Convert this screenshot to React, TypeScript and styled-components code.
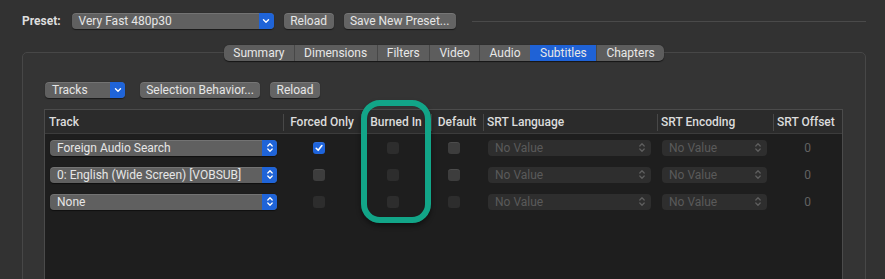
import React from "react";
import styled, { createGlobalStyle } from "styled-components";

const GlobalStyle = createGlobalStyle`
  html, body {
    margin: 0;
    padding: 0;
    background: #323232;
  }
  body {
    font-family: Roboto, "Liberation Sans", sans-serif;
    font-size: 12px;
    color: #e2e2e2;
  }
`;

type Track = {
  name: string;
  forced: boolean;
  dim: boolean;
};

const tracks: Track[] = [
  { name: "Foreign Audio Search", forced: true, dim: false },
  { name: "0: English (Wide Screen) [VOBSUB]", forced: false, dim: false },
  { name: "None", forced: false, dim: true },
];

const tabs = ["Summary", "Dimensions", "Filters", "Video", "Audio", "Subtitles", "Chapters"];

const columns = [
  { title: "Track", align: "left" },
  { title: "Forced Only", align: "center" },
  { title: "Burned In", align: "center" },
  { title: "Default", align: "center" },
  { title: "SRT Language", align: "left" },
  { title: "SRT Encoding", align: "left" },
  { title: "SRT Offset", align: "left" },
];

function ChevronDown() {
  return (
    <svg width="8" height="6" viewBox="0 0 8 6">
      <path d="M1.5 1.8 L4 4.2 L6.5 1.8" fill="none" stroke="#fff" strokeWidth="1.4" strokeLinecap="round" strokeLinejoin="round" />
    </svg>
  );
}

function ChevronUpDown({ color = "#fff" }: { color?: string }) {
  return (
    <svg width="8" height="11" viewBox="0 0 8 11">
      <path d="M1.8 4 L4 1.8 L6.2 4" fill="none" stroke={color} strokeWidth="1.3" strokeLinecap="round" strokeLinejoin="round" />
      <path d="M1.8 7 L4 9.2 L6.2 7" fill="none" stroke={color} strokeWidth="1.3" strokeLinecap="round" strokeLinejoin="round" />
    </svg>
  );
}

function Check() {
  return (
    <svg width="10" height="10" viewBox="0 0 10 10">
      <path d="M2.2 5.3 L4.2 7.3 L7.9 2.6" fill="none" stroke="#fff" strokeWidth="1.6" strokeLinecap="round" strokeLinejoin="round" />
    </svg>
  );
}

function App() {
  return (
    <Window>
      <GlobalStyle />
      <TopBar>
        <Label>Preset:</Label>
        <PopUp $width={202}>
          <PopText>Very Fast 480p30</PopText>
          <ArrowCap>
            <ChevronDown />
          </ArrowCap>
        </PopUp>
        <PushButton $width={50}>Reload</PushButton>
        <PushButton $width={112}>Save New Preset...</PushButton>
        <Rule />
      </TopBar>

      <Panel>
        <TabBar>
          {tabs.map((t) => (
            <Tab key={t} $active={t === "Subtitles"}>
              {t}
            </Tab>
          ))}
        </TabBar>

        <Toolbar>
          <PopUp $width={80}>
            <PopText>Tracks</PopText>
            <ArrowCap>
              <ChevronDown />
            </ArrowCap>
          </PopUp>
          <PushButton $width={120} $gap={15}>Selection Behavior...</PushButton>
          <PushButton $width={50}>Reload</PushButton>
        </Toolbar>

        <Table>
          <HeaderRow>
            {columns.map((c, i) => (
              <HeaderCell key={c.title} $align={c.align} $sep={i > 0}>
                {c.title}
              </HeaderCell>
            ))}
          </HeaderRow>
          {tracks.map((t) => (
            <Row key={t.name}>
              <TrackCell>
                <PopUp $width={227}>
                  <PopText>{t.name}</PopText>
                  <ArrowCap>
                    <ChevronUpDown />
                  </ArrowCap>
                </PopUp>
              </TrackCell>
              <BoxCell>
                <Checkbox $checked={t.forced} $dim={t.dim}>
                  {t.forced && <Check />}
                </Checkbox>
              </BoxCell>
              <BoxCell>
                <Checkbox $checked={false} $dim />
              </BoxCell>
              <BoxCell>
                <Checkbox $checked={false} $dim={t.dim} />
              </BoxCell>
              <TrackCell>
                <DisabledPopUp $width={163}>
                  <span>No Value</span>
                  <ChevronUpDown color="#5e5e5e" />
                </DisabledPopUp>
              </TrackCell>
              <TrackCell>
                <DisabledPopUp $width={105}>
                  <span>No Value</span>
                  <ChevronUpDown color="#5e5e5e" />
                </DisabledPopUp>
              </TrackCell>
              <OffsetCell>0</OffsetCell>
            </Row>
          ))}
        </Table>
      </Panel>

      <Highlight />
    </Window>
  );
}

const Window = styled.div`
  position: relative;
  height: 279px;
  overflow: hidden;
  background: #323232;
`;

const TopBar = styled.div`
  display: flex;
  align-items: center;
  height: 16px;
  padding: 13px 19px 0 22px;
`;

const Label = styled.span`
  font-weight: 700;
  color: #dedede;
  margin-right: 11px;
`;

const PopUp = styled.div<{ $width: number }>`
  position: relative;
  display: flex;
  align-items: center;
  box-sizing: border-box;
  width: ${(p) => p.$width}px;
  height: 16px;
  border-radius: 4px;
  background: #606060;
  box-shadow: inset 0 1px 0 rgba(255, 255, 255, 0.12), 0 0.5px 1px rgba(0, 0, 0, 0.5);
  overflow: hidden;
`;

const PopText = styled.span`
  flex: 1;
  padding-left: 7px;
  color: #e6e6e6;
  white-space: nowrap;
  overflow: hidden;
`;

const ArrowCap = styled.span`
  display: flex;
  align-items: center;
  justify-content: center;
  width: 15px;
  height: 100%;
  background: #1f64d8;
`;

const PushButton = styled.div<{ $width: number; $gap?: number }>`
  display: flex;
  align-items: center;
  justify-content: center;
  box-sizing: border-box;
  width: ${(p) => p.$width}px;
  height: 16px;
  margin-left: ${(p) => p.$gap ?? 10}px;
  border-radius: 4px;
  background: #646464;
  box-shadow: inset 0 1px 0 rgba(255, 255, 255, 0.12), 0 0.5px 1px rgba(0, 0, 0, 0.5);
  color: #e6e6e6;
  white-space: nowrap;
`;

const Rule = styled.div`
  flex: 1;
  height: 1px;
  margin-left: 16px;
  background: #4a4a4a;
`;

const Panel = styled.div`
  box-sizing: border-box;
  width: 844px;
  height: 260px;
  margin: 23px 0 0 22px;
  border: 1px solid #474747;
  border-radius: 5px;
  background: #343434;
  padding: 0 21px;
`;

const TabBar = styled.div`
  display: flex;
  width: fit-content;
  margin: -8px auto 0;
  height: 16px;
  border-radius: 5px;
  overflow: hidden;
  background: #5d5d5d;
  box-shadow: 0 0.5px 1px rgba(0, 0, 0, 0.6);
`;

const Tab = styled.div<{ $active: boolean }>`
  display: flex;
  align-items: center;
  padding: 0 9.3px;
  color: #e8e8e8;
  background: ${(p) => (p.$active ? "#1f62d6" : "transparent")};
  border-left: 1px solid ${(p) => (p.$active ? "#1f62d6" : "#474747")};

  &:first-child {
    border-left: none;
  }
`;

const Toolbar = styled.div`
  display: flex;
  align-items: center;
  margin: 21px 0 0 1px;
`;

const Table = styled.div`
  box-sizing: border-box;
  width: 799px;
  height: 200px;
  margin-top: 11px;
  border: 1px solid #4b4b4b;
  background: #1e1e1e;
`;

const grid = `
  display: grid;
  grid-template-columns: 238px 78px 70px 52px 174px 116px 69px;
`;

const HeaderRow = styled.div`
  ${grid}
  height: 23px;
  background: #2b2b2b;
  border-bottom: 1px solid #3c3c3c;
`;

const HeaderCell = styled.div<{ $align: string; $sep: boolean }>`
  position: relative;
  display: flex;
  align-items: center;
  justify-content: ${(p) => (p.$align === "center" ? "center" : "flex-start")};
  padding-left: ${(p) => (p.$align === "center" ? 0 : 4)}px;
  font-weight: 500;
  color: #dcdcdc;
  white-space: nowrap;

  &::before {
    content: "";
    display: ${(p) => (p.$sep ? "block" : "none")};
    position: absolute;
    left: 0;
    top: 4px;
    bottom: 2px;
    width: 1px;
    background: #484848;
  }
`;

const Row = styled.div`
  ${grid}
  height: 27px;
`;

const TrackCell = styled.div`
  display: flex;
  align-items: center;
  padding-left: 5px;
`;

const BoxCell = styled.div`
  display: flex;
  align-items: center;
  justify-content: center;
  padding-right: 7px;
`;

const Checkbox = styled.div<{ $checked: boolean; $dim?: boolean }>`
  display: flex;
  align-items: center;
  justify-content: center;
  width: 12px;
  height: 12px;
  border-radius: 3px;
  background: ${(p) => (p.$checked ? "#1e64dc" : p.$dim ? "#2d2d2d" : "#3d3d3d")};
  box-shadow: ${(p) => (p.$dim && !p.$checked ? "none" : "inset 0 1px 0 rgba(255,255,255,0.08)")};
`;

const DisabledPopUp = styled.div<{ $width: number }>`
  display: flex;
  align-items: center;
  justify-content: space-between;
  box-sizing: border-box;
  width: ${(p) => p.$width}px;
  height: 16px;
  padding: 0 5px 0 7px;
  border-radius: 4px;
  background: #2e2e2e;
  color: #5a5a5a;
`;

const OffsetCell = styled.div`
  display: flex;
  align-items: center;
  justify-content: center;
  color: #626262;
`;

const Highlight = styled.div`
  position: absolute;
  left: 361px;
  top: 100px;
  box-sizing: border-box;
  width: 70px;
  height: 123px;
  border: 6px solid #12a588;
  border-radius: 19px;
  box-shadow: 0 3px 5px rgba(0, 0, 0, 0.45), inset 0 0 1px rgba(0, 0, 0, 0.3);
  pointer-events: none;
`;

export default App;
